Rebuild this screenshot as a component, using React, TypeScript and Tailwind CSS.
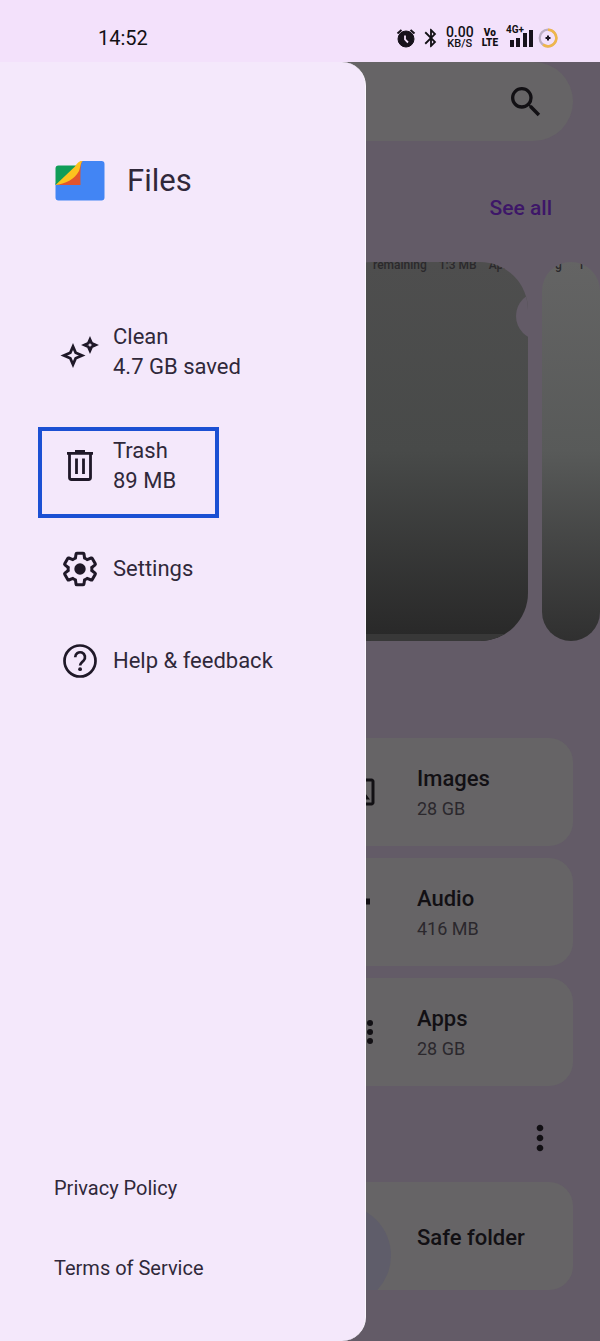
import type { ReactNode } from 'react'
import { MdBluetooth, MdMoreVert, MdMusicNote, MdOutlineImage, MdSearch } from 'react-icons/md'

function AlarmIcon() {
  return (
    <svg viewBox="0 0 20 20" className="h-5 w-5" fill="none" stroke="#17121b">
      <circle cx="10" cy="11" r="8" fill="#17121b" />
      <path d="M1.5 5.5 5.5 2M18.5 5.5 14.5 2" strokeWidth="2" />
      <path d="M9 7.5v4l3 3" stroke="#f3e1fb" strokeWidth="1.8" />
    </svg>
  )
}

function SignalIcon() {
  return (
    <svg viewBox="0 0 24 18" className="h-[18px] w-6" fill="#17121b">
      <rect x="0" y="11" width="4" height="7" />
      <rect x="6" y="9" width="4" height="9" />
      <rect x="13" y="4" width="4" height="14" />
      <rect x="19" y="1" width="4" height="17" />
    </svg>
  )
}

function BatteryIcon() {
  return (
    <svg viewBox="0 0 20 20" className="h-5 w-5" fill="none">
      <circle cx="10" cy="10" r="8.3" stroke="#bcaec4" strokeWidth="2.2" />
      <path d="M10 1.7a8.3 8.3 0 1 1-5 14.9" stroke="#efb64c" strokeWidth="2.6" />
      <path d="M10 7.5 10.8 9.2 12.5 10 10.8 10.8 10 12.5 9.2 10.8 7.5 10 9.2 9.2z" fill="#17121b" stroke="#17121b" />
    </svg>
  )
}

function FilesLogo() {
  return (
    <svg viewBox="0 0 50 40" className="h-10 w-[50px]">
      <path d="M25 1.5 27.5 0H46.5a3 3 0 0 1 3 3V36.5a3 3 0 0 1-3 3H3.5a3 3 0 0 1-3-3V22H25z" fill="#4285f4" />
      <path d="M.5 24V7.5a3 3 0 0 1 3-3H22L9 19z" fill="#109d58" />
      <path d="M27.5 0C25 2 25.500 16 25.500 24H.5C14 21 20 12 22 5 23 2 25 0 27.500 0z" fill="#e2542d" />
      <path d="M27.5 0C25.500 2 25.500 6 24 10 20 18 10 23 .5 24L20 5.500C22 2 24 0 27.500 0z" fill="#fcc31e" />
    </svg>
  )
}

function SparkleIcon() {
  return (
    <svg viewBox="0 0 40 40" className="h-10 w-10" fill="none" stroke="currentColor" strokeWidth="2.8">
      <path d="M13 14.5 15.7 20.8 22 23.5 15.7 26.2 13 32.5 10.3 26.2 4 23.5 10.3 20.8z" />
      <path d="M30 7.5 31.7 11.3 35.5 13 31.7 14.7 30 18.5 28.3 14.7 24.5 13 28.3 11.3z" />
    </svg>
  )
}

function TrashIcon() {
  return (
    <svg viewBox="0 0 40 40" className="h-10 w-10" fill="none" stroke="currentColor" strokeWidth="2.8">
      <path d="M7 7.400H33M15 5.400H25" />
      <path d="M9.5 7.500V31.500a2 2 0 0 0 2 2H28.500a2 2 0 0 0 2-2V7.500" />
      <path d="M16.5 12.500V28M23.500 12.500V28" />
    </svg>
  )
}

function GearIcon() {
  return (
    <svg viewBox="0 0 24 24" className="h-[38px] w-[38px]" fill="none" stroke="currentColor" strokeWidth="1.9">
      <path d="M19.430 12.980c.04-.32.07-.64.07-.98 0-.34-.03-.66-.07-.98l2.110-1.650c.19-.15.24-.42.12-.64l-2-3.460a.5.5 0 0 0-.61-.22l-2.490 1c-.52-.4-1.080-.73-1.690-.98l-.38-2.650A.488.488 0 0 0 14 2h-4c-.25 0-.46.18-.49.42l-.38 2.650c-.61.25-1.170.59-1.690.98l-2.490-1a.5.5 0 0 0-.61.22l-2 3.460c-.13.22-.07.49.12.64l2.110 1.650c-.04.32-.07.65-.07.98 0 .33.03.66.07.98l-2.110 1.650c-.19.15-.24.42-.12.64l2 3.460a.5.5 0 0 0 .61.22l2.490-1c.52.4 1.080.73 1.690.98l.38 2.650c.03.24.24.42.49.42h4c.25 0 .46-.18.49-.42l.38-2.650c.61-.25 1.170-.59 1.690-.98l2.490 1a.5.5 0 0 0 .61-.22l2-3.460c.12-.22.07-.49-.12-.64z" />
      <circle cx="12" cy="12" r="3.6" fill="currentColor" stroke="none" />
    </svg>
  )
}

function HelpIcon() {
  return (
    <svg viewBox="0 0 40 40" className="h-10 w-10" fill="none" stroke="currentColor" strokeWidth="2.7">
      <circle cx="20" cy="20" r="15.5" />
      <path d="M15.2 16.300a4.900 4.900 0 1 1 8.400 3.300c-1.900 1.900-3.500 2.700-3.500 5" />
      <circle cx="20.1" cy="28.2" r="1.9" fill="currentColor" stroke="none" />
    </svg>
  )
}

function AppsIcon() {
  return (
    <svg viewBox="0 0 36 36" className="h-9 w-9" fill="currentColor">
      {[9, 18, 27].map((y) => [9, 18, 27].map((x) => <circle key={`${x}-${y}`} cx={x} cy={y} r="3" />))}
    </svg>
  )
}

interface DrawerItemProps {
  icon: ReactNode
  label: string
  detail?: string
  highlighted?: boolean
}

function DrawerItem({ icon, label, detail, highlighted }: DrawerItemProps) {
  return (
    <li className="relative">
      <button className="flex w-full items-center gap-[13px] py-[27px] pl-[60px] text-left">
        <span className="flex h-[38px] w-10 items-center justify-center text-[#1f1828]">{icon}</span>
        <span className="text-[22px] leading-[30px]">
          <span className="block">{label}</span>
          {detail && <span className="block">{detail}</span>}
        </span>
      </button>
      {highlighted && (
        <div className="pointer-events-none absolute top-[18px] left-[38px] h-[91px] w-[181px] border-4 border-[#1b50d3]" />
      )}
    </li>
  )
}

interface TileProps {
  icon?: ReactNode
  label: string
  size?: string
}

function Tile({ icon, label, size }: TileProps) {
  return (
    <button className="relative flex h-[108px] w-full items-center gap-[38px] overflow-hidden rounded-3xl bg-[#666466] pl-[37px] text-left">
      <span className="flex h-9 w-9 items-center justify-center text-4xl">{icon}</span>
      <span className="pt-[3px] leading-[30px]">
        <span className="block text-[22px] font-medium">{label}</span>
        {size && <span className="block text-lg leading-[30px] text-[#2b282d]">{size}</span>}
      </span>
      {!icon && <span className="absolute top-[23px] left-[-16px] h-[101px] w-[101px] rounded-full bg-[#5f5d6a]" />}
    </button>
  )
}

export default function App() {
  return (
    <div className="flex min-h-screen flex-col bg-[#635b67] font-[Roboto,sans-serif] text-[#121014]">
      <header className="flex h-[62px] items-center justify-between bg-[#f3e1fb] pt-[14px] pr-[42px] pl-[98px]">
        <span className="text-xl leading-6">14:52</span>
        <div className="flex items-center gap-1">
          <AlarmIcon />
          <MdBluetooth className="h-[22px] w-[22px]" />
          <div className="text-center font-medium">
            <div className="text-sm leading-3">0.00</div>
            <div className="text-[11px] leading-3">KB/S</div>
          </div>
          <div className="ml-1 text-center text-[10px] leading-[10px] font-black">
            <div>Vo</div>
            <div>LTE</div>
          </div>
          <div className="relative ml-2">
            <SignalIcon />
            <span className="absolute -top-1 -left-1 text-[10px] leading-[10px] font-bold">4G+</span>
          </div>
          <BatteryIcon />
        </div>
      </header>

      <div className="relative flex flex-1 flex-col">
        <main className="flex flex-1 flex-col pb-[50px]">
          <div className="mr-[27px] flex h-[79px] items-center justify-end rounded-r-[40px] bg-[#666466] pr-[27px]">
            <button aria-label="Search">
              <MdSearch className="h-10 w-10" />
            </button>
          </div>

          <div className="mt-[52px] flex justify-end pr-12">
            <a href="#recent" className="text-[21px] leading-[30px] font-medium text-[#3d1668]">See all</a>
          </div>

          <div className="mt-[39px] flex h-[379px] justify-end gap-[14px]">
            <div className="relative flex w-[34%] flex-col justify-between overflow-hidden rounded-[48px] bg-linear-to-b from-[#4e4e4e] via-[#484a49] via-50% to-[#282828]">
              <div className="-mt-[3px] flex gap-3 pl-[49px] text-xs leading-3 font-medium whitespace-nowrap text-[#2b292c]">
                <span>remaining</span>
                <span>1:3 MB</span>
                <span>Apr</span>
              </div>
              <div className="h-[7px] bg-[#383838]" />
              <div className="absolute top-[30px] -right-9 h-12 w-12 rounded-full bg-[#635b67]" />
            </div>
            <div className="w-[58px] overflow-hidden rounded-[29px] bg-linear-to-b from-[#646464] via-[#585a59] via-50% to-[#303030]">
              <div className="-mt-[3px] flex gap-4 pl-[13px] text-xs leading-3 font-medium text-[#2b292c]">
                <span>g</span>
                <span>1</span>
              </div>
            </div>
          </div>

          <div className="mt-[97px] mr-[27px] ml-[51%] flex flex-col gap-3">
            <Tile icon={<MdOutlineImage />} label="Images" size="28 GB" />
            <Tile icon={<MdMusicNote />} label="Audio" size="416 MB" />
            <Tile icon={<AppsIcon />} label="Apps" size="28 GB" />
          </div>

          <div className="mt-8 flex justify-end pr-10">
            <button aria-label="More options">
              <MdMoreVert className="h-10 w-10" />
            </button>
          </div>

          <div className="mt-6 mr-[27px] ml-[51%]">
            <Tile label="Safe folder" />
          </div>
        </main>

        <aside className="absolute inset-y-0 left-0 flex w-[61%] flex-col rounded-r-3xl border-r border-[#fcf8ff] bg-[#f4e8fb] text-[#30283a]">
          <div className="flex items-center gap-[22px] pt-[99px] pl-[55px]">
            <FilesLogo />
            <h1 className="text-[31px] leading-10">Files</h1>
          </div>
          <nav className="mt-[94px]">
            <ul>
              <DrawerItem icon={<SparkleIcon />} label="Clean" detail="4.7 GB saved" />
              <DrawerItem icon={<TrashIcon />} label="Trash" detail="89 MB" highlighted />
              <DrawerItem icon={<GearIcon />} label="Settings" />
              <DrawerItem icon={<HelpIcon />} label="Help & feedback" />
            </ul>
          </nav>
          <div className="mt-auto flex flex-col items-start gap-[50px] pb-[58px] pl-[54px] text-xl leading-[30px]">
            <a href="#privacy">Privacy Policy</a>
            <a href="#terms">Terms of Service</a>
          </div>
        </aside>
      </div>
    </div>
  )
}
